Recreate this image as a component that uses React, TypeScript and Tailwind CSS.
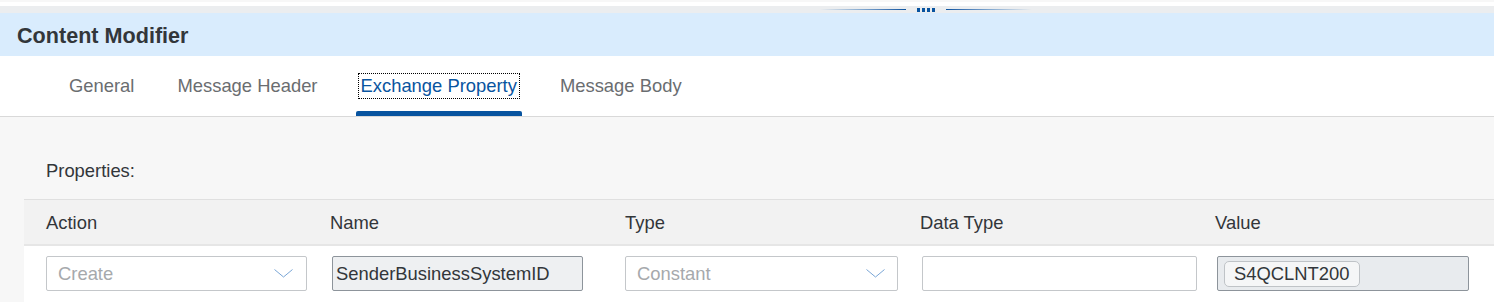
import { useState } from 'react'

const tabs = ['General', 'Message Header', 'Exchange Property', 'Message Body']

function Chevron() {
    return (
        <svg width="19" height="9" viewBox="0 0 19 9" className="shrink-0">
            <polyline points="0.5,0.5 9.5,8 18.5,0.5" fill="none" stroke="#7aa6d6" strokeWidth="1" />
        </svg>
    )
}

function Splitter() {
    return (
        <div className="flex items-center h-[7px] bg-[#ebedef] pl-[820px]">
            <div className="w-[86px] h-px bg-gradient-to-r from-transparent via-[#7fa6cf] to-[#0854a0]" />
            <div className="flex gap-[2px] mx-[11px] mt-[1px]">
                <span className="w-[3px] h-[4px] bg-[#0854a0]" />
                <span className="w-[3px] h-[4px] bg-[#0854a0]" />
                <span className="w-[3px] h-[4px] bg-[#0854a0]" />
                <span className="w-[3px] h-[4px] bg-[#0854a0]" />
            </div>
            <div className="w-[86px] h-px bg-gradient-to-r from-[#0854a0] via-[#7fa6cf] to-transparent" />
        </div>
    )
}

function App() {
    const [active, setActive] = useState(2)

    return (
        <div className="w-[1494px] h-[302px] overflow-hidden bg-[#f7f7f7] text-[#32363a] font-['Liberation_Sans',Arial,sans-serif]">
            <div className="h-[2px] bg-[#f7f7f7]" />
            <div className="h-[4px] bg-white" />
            <Splitter />

            <header className="h-[43px] bg-[#d9ecfd] flex items-center pl-[17px] pt-[3px]">
                <h1 className="text-[21.6px] font-bold text-[#32363a]">Content Modifier</h1>
            </header>

            <nav className="h-[61px] bg-white border-b border-[#d9d9d9] flex pl-[64px] gap-[33px]">
                {tabs.map((t, i) => (
                    <button
                        key={t}
                        onClick={() => setActive(i)}
                        className="flex flex-col justify-between h-full pt-[18px]"
                    >
                        <span
                            className={
                                i === active
                                    ? 'text-[18.4px] leading-[24px] px-[2px] mx-[3px] text-[#0854a0] outline outline-1 outline-dotted outline-black'
                                    : 'text-[18.4px] leading-[24px] px-[5px] text-[#6a6d70]'
                            }
                        >
                            {t}
                        </span>
                        <span className={i === active ? 'h-[5px] rounded-t-[2px] bg-[#0854a0]' : 'h-[5px]'} />
                    </button>
                ))}
            </nav>

            <section className="pl-[24px]">
                <p className="pl-[22px] pt-[43px] pb-[17px] text-[18.4px] leading-[22px] text-[#32363a]">Properties:</p>

                <div className="grid grid-cols-[284px_295px_295px_295px_1fr] h-[47px] bg-[#f2f2f2] border-t border-[#e0e0e0] border-b-2 border-b-[#e6e6e6] items-center text-[18.4px] text-[#32363a]">
                    <div className="pl-[22px] pt-[1px]">Action</div>
                    <div className="pl-[22px] pt-[1px]">Name</div>
                    <div className="pl-[22px] pt-[1px]">Type</div>
                    <div className="pl-[22px] pt-[1px]">Data Type</div>
                    <div className="pl-[22px] pt-[1px]">Value</div>
                </div>

                <div className="grid grid-cols-[284px_295px_295px_295px_1fr] bg-white pt-[10px] h-[60px] text-[18.4px]">
                    <div className="pl-[22px]">
                        <div className="w-[261px] h-[35px] bg-white border border-[#c4c7ca] rounded-[2px] flex items-center justify-between pl-[11px] pr-[13px]">
                            <span className="text-[#a6a9ac]">Create</span>
                            <Chevron />
                        </div>
                    </div>
                    <div className="pl-[24px]">
                        <div className="w-[251px] h-[35px] bg-[#eef0f2] border border-[#8d949b] rounded-[2px] flex items-center pl-[3px]">
                            <span className="text-[#32363a]">SenderBusinessSystemID</span>
                        </div>
                    </div>
                    <div className="pl-[22px]">
                        <div className="w-[273px] h-[35px] bg-white border border-[#c4c7ca] rounded-[2px] flex items-center justify-between pl-[11px] pr-[12px]">
                            <span className="text-[#a6a9ac]">Constant</span>
                            <Chevron />
                        </div>
                    </div>
                    <div className="pl-[24px]">
                        <div className="w-[275px] h-[35px] bg-white border border-[#c4c7ca] rounded-[2px]" />
                    </div>
                    <div className="pl-[24px]">
                        <div className="w-[252px] h-[35px] bg-[#e8ebee] border border-[#8d949b] rounded-[2px] flex items-center pl-[6px]">
                            <span className="h-[26px] px-[9px] flex items-center bg-[#f5f6f7] border border-[#bfc3c7] rounded-[5px] text-[#32363a]">
                                S4QCLNT200
                            </span>
                        </div>
                    </div>
                </div>
            </section>
        </div>
    )
}

export default App
